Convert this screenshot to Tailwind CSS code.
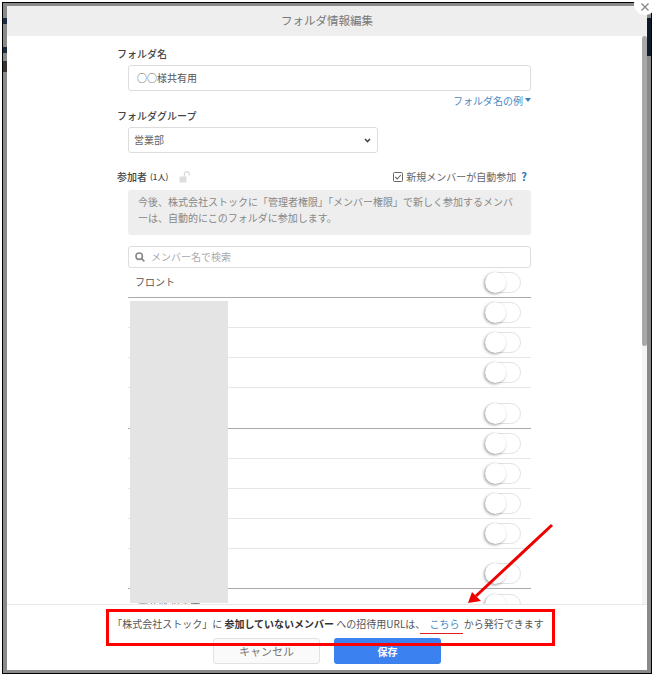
<!DOCTYPE html>
<html lang="ja">
<head>
<meta charset="UTF-8">
<title>フォルダ情報編集</title>
<script src="https://cdn.jsdelivr.net/npm/@tailwindcss/browser@4"></script>
</head>
<body class="bg-white overflow-hidden font-['Noto_Sans_CJK_JP','Liberation_Sans',sans-serif]">
<div class="relative w-[654px] h-[676px] p-[2px]">
  <!-- backdrop frame -->
  <div class="relative w-[650px] h-[672px] border border-black bg-[#8a8a8a] pl-1 pt-[3px] overflow-hidden">
    <div class="absolute left-0 top-[15px] w-1 h-[6px] bg-[#1c2a44]"></div>
    <div class="absolute left-0 top-[44px] w-1 h-[6px] bg-[#1c2a44]"></div>
    <div class="absolute left-0 top-[58px] w-1 h-[11px] bg-[#3a3230]"></div>
    <div class="absolute right-0 top-[15px] w-1 h-[38px] bg-[#10182c]"></div>

    <div class="w-[640px] h-[664px] bg-white flex flex-col">
      <div class="h-[30px] shrink-0 bg-[#eeeeee] flex items-center justify-center text-[11.5px] text-[#777]">フォルダ情報編集</div>

      <div class="relative flex-1 overflow-hidden pl-[110px] pr-[116px] pt-[11px]">
        <div class="w-[414px]">
          <div class="h-[18px] pb-[6px] flex items-center text-[10px] font-medium text-[#444]">フォルダ名</div>
          <div class="ml-[11px] h-[26px] border border-[#ddd] rounded-[3px] flex items-center pl-2 pb-[2px] text-[10px] text-[#555]">○○様共有用</div>
          <div class="h-[18px] flex items-center justify-end gap-[2px] text-[10px] text-[#4a8bc4]">フォルダ名の例<span class="w-0 h-0 border-x-[3.5px] border-x-transparent border-t-[4px] border-t-[#3f7fb8]"></span></div>
          <div class="h-[18px] pb-[6px] flex items-center text-[10px] font-medium text-[#444]">フォルダグループ</div>
          <div class="ml-[11px] w-[250px] h-[26px] border border-[#ddd] rounded-[3px] flex items-center justify-between pl-[5px] pr-[4px] pb-[2px] text-[10px] text-[#666]">
            営業部
            <svg class="w-[7px] h-[5px] mt-[2px] mr-[2px]" viewBox="0 0 8 6" fill="none" stroke="#444" stroke-width="1.8"><path d="M1 1.2 4 4.3 7 1.2"/></svg>
          </div>
          <div class="mt-[15px] h-[18px] pb-[1px] flex items-center justify-between text-[#444]">
            <div class="flex items-center">
              <span class="text-[10px] font-medium">参加者</span>
              <span class="ml-[3px] text-[8px] font-medium">(1人)</span>
              <svg class="ml-[11px] mt-[1px] w-3 h-3" viewBox="0 0 12 12" fill="none"><rect x="0.5" y="5.5" width="7" height="6" fill="#ddd"/><path d="M5.5 5.5V3a2.4 2.4 0 0 1 4.8 0v1.5" stroke="#ddd" stroke-width="1.4"/></svg>
            </div>
            <div class="flex items-center text-[10px] text-[#666]">
              <svg class="w-[10px] h-[10px] mr-[3px]" viewBox="0 0 10 10" fill="none" stroke="#666"><rect x="0.5" y="0.5" width="9" height="9" rx="1"/><path d="M2.3 5 4.3 7 7.8 3" stroke-width="1.1"/></svg>
              新規メンバーが自動参加
              <span class="ml-[5px] mr-[4px] text-[11px] font-bold text-[#2f75b5]">?</span>
            </div>
          </div>
          <div class="mt-[4px] ml-[11px] h-[45px] bg-[#eeeeee] rounded-[3px] pl-[10px] pt-[4px] text-[10px] leading-[16px] text-[#888] whitespace-nowrap">今後、株式会社ストックに「管理者権限」「メンバー権限」で新しく参加するメンバ<br>ーは、自動的にこのフォルダに参加します。</div>
          <div class="mt-[11px] ml-[11px] h-[22px] border border-[#ddd] rounded-[3px] flex items-center pl-[6px] pb-[2px] text-[10px] text-[#aaa]">
            <svg class="w-[10px] h-[10px] mr-[6px] mt-[2px]" viewBox="0 0 10 10" fill="none" stroke="#888" stroke-width="1.6"><circle cx="4.2" cy="4.2" r="3.2"/><path d="M6.6 6.6 9.4 9.4"/></svg>
            メンバー名で検索
          </div>

          <!-- member rows -->
          <div class="ml-[11px] text-[10px] text-[#555]">
            <div class="h-[30px] border-b border-[#aaa] flex items-center justify-between pl-[7px] pr-[10px]"><span class="-mt-[2px]">フロント</span><span class="relative block w-[36px] h-[21px] border border-[#e2e2e2] rounded-full"><span class="absolute -left-px -top-px w-[21px] h-[21px] rounded-full bg-white shadow-[-1px_1px_3px_rgba(0,0,0,0.4)]"></span></span></div>
            <div class="h-[30px] border-b border-[#e6e6e6] flex items-center justify-end pr-[10px]"><span class="relative block w-[36px] h-[21px] border border-[#e2e2e2] rounded-full"><span class="absolute -left-px -top-px w-[21px] h-[21px] rounded-full bg-white shadow-[-1px_1px_3px_rgba(0,0,0,0.4)]"></span></span></div>
            <div class="h-[30px] border-b border-[#e6e6e6] flex items-center justify-end pr-[10px]"><span class="relative block w-[36px] h-[21px] border border-[#e2e2e2] rounded-full"><span class="absolute -left-px -top-px w-[21px] h-[21px] rounded-full bg-white shadow-[-1px_1px_3px_rgba(0,0,0,0.4)]"></span></span></div>
            <div class="h-[30px] border-b border-[#e6e6e6] flex items-center justify-end pr-[10px]"><span class="relative block w-[36px] h-[21px] border border-[#e2e2e2] rounded-full"><span class="absolute -left-px -top-px w-[21px] h-[21px] rounded-full bg-white shadow-[-1px_1px_3px_rgba(0,0,0,0.4)]"></span></span></div>
            <div class="h-[41px] border-b border-[#aaa] flex items-end justify-end pr-[10px] pb-1"><span class="relative block w-[36px] h-[21px] border border-[#e2e2e2] rounded-full"><span class="absolute -left-px -top-px w-[21px] h-[21px] rounded-full bg-white shadow-[-1px_1px_3px_rgba(0,0,0,0.4)]"></span></span></div>
            <div class="h-[30px] border-b border-[#e6e6e6] flex items-center justify-end pr-[10px]"><span class="relative block w-[36px] h-[21px] border border-[#e2e2e2] rounded-full"><span class="absolute -left-px -top-px w-[21px] h-[21px] rounded-full bg-white shadow-[-1px_1px_3px_rgba(0,0,0,0.4)]"></span></span></div>
            <div class="h-[30px] border-b border-[#e6e6e6] flex items-center justify-end pr-[10px]"><span class="relative block w-[36px] h-[21px] border border-[#e2e2e2] rounded-full"><span class="absolute -left-px -top-px w-[21px] h-[21px] rounded-full bg-white shadow-[-1px_1px_3px_rgba(0,0,0,0.4)]"></span></span></div>
            <div class="h-[30px] border-b border-[#e6e6e6] flex items-center justify-end pr-[10px]"><span class="relative block w-[36px] h-[21px] border border-[#e2e2e2] rounded-full"><span class="absolute -left-px -top-px w-[21px] h-[21px] rounded-full bg-white shadow-[-1px_1px_3px_rgba(0,0,0,0.4)]"></span></span></div>
            <div class="h-[30px] border-b border-[#e6e6e6] flex items-center justify-end pr-[10px]"><span class="relative block w-[36px] h-[21px] border border-[#e2e2e2] rounded-full"><span class="absolute -left-px -top-px w-[21px] h-[21px] rounded-full bg-white shadow-[-1px_1px_3px_rgba(0,0,0,0.4)]"></span></span></div>
            <div class="h-[40px] border-b border-[#aaa] flex items-end justify-end pr-[10px] pb-1"><span class="relative block w-[36px] h-[21px] border border-[#e2e2e2] rounded-full"><span class="absolute -left-px -top-px w-[21px] h-[21px] rounded-full bg-white shadow-[-1px_1px_3px_rgba(0,0,0,0.4)]"></span></span></div>
            <div class="h-[30px] flex items-center justify-between pl-[10px] pr-[10px]"><span class="text-[#777]">営業部 担当者</span><span class="relative block w-[36px] h-[21px] border border-[#e2e2e2] rounded-full"><span class="absolute -left-px -top-px w-[21px] h-[21px] rounded-full bg-white shadow-[-1px_1px_3px_rgba(0,0,0,0.4)]"></span></span></div>
          </div>
        </div>
        <!-- redaction block -->
        <div class="absolute left-[123px] top-[265px] w-[98px] h-[302px] bg-[#e4e4e4]"></div>
        <!-- scrollbar -->
        <div class="absolute right-0 top-0 bottom-0 w-[5px] bg-[#f4f4f4]">
          <div class="h-[310px] rounded-[3px] bg-[#a8a8a8]"></div>
        </div>
      </div>

      <div class="h-[66px] shrink-0 border-t border-[#e8e8e8] flex flex-col items-center">
        <div class="mt-[9px] h-[18px] pl-[2px] flex items-center text-[10px] text-[#555] whitespace-pre">「株式会社ストック」に <b class="font-bold text-[#333]">参加していないメンバー</b> への招待用URLは、 <span class="mx-[2px] text-[#4a8bc4]">こちら</span> から発行できます</div>
        <div class="mt-[6px] flex gap-[14px]">
          <button class="w-[107px] h-[26px] border border-[#e2e2e2] rounded-[3px] bg-[#fafafa] text-[11px] text-[#777]">キャンセル</button>
          <button class="w-[107px] h-[26px] rounded-[3px] bg-[#3b82f0] text-[10px] font-bold text-white">保存</button>
        </div>
      </div>
    </div>
  </div>

  <!-- close button -->
  <div class="absolute left-[634px] -top-[7px] w-[22px] h-[22px] rounded-full bg-white flex items-center justify-center pt-[6px]">
    <svg class="w-[8px] h-[8px]" viewBox="0 0 8 8" stroke="#888" stroke-width="1.4"><path d="M.5.5 7.5 7.5M7.5.5.5 7.5"/></svg>
  </div>

  <!-- red annotation -->
  <div class="absolute left-[106px] top-[609px] w-[449px] h-[37px] border-[3px] border-[#ff0000]"></div>
  <div class="absolute left-[420px] top-[633px] w-[43px] h-px bg-[#e02020]"></div>
  <svg class="absolute left-[460px] top-[520px] w-[100px] h-[90px]" viewBox="0 0 100 90" fill="none">
    <path d="M92 5 16 76" stroke="#ee0000" stroke-width="3"/>
    <path d="M8 83 12 72 21 81Z" fill="#ee0000"/>
  </svg>
</div>
</body>
</html>
